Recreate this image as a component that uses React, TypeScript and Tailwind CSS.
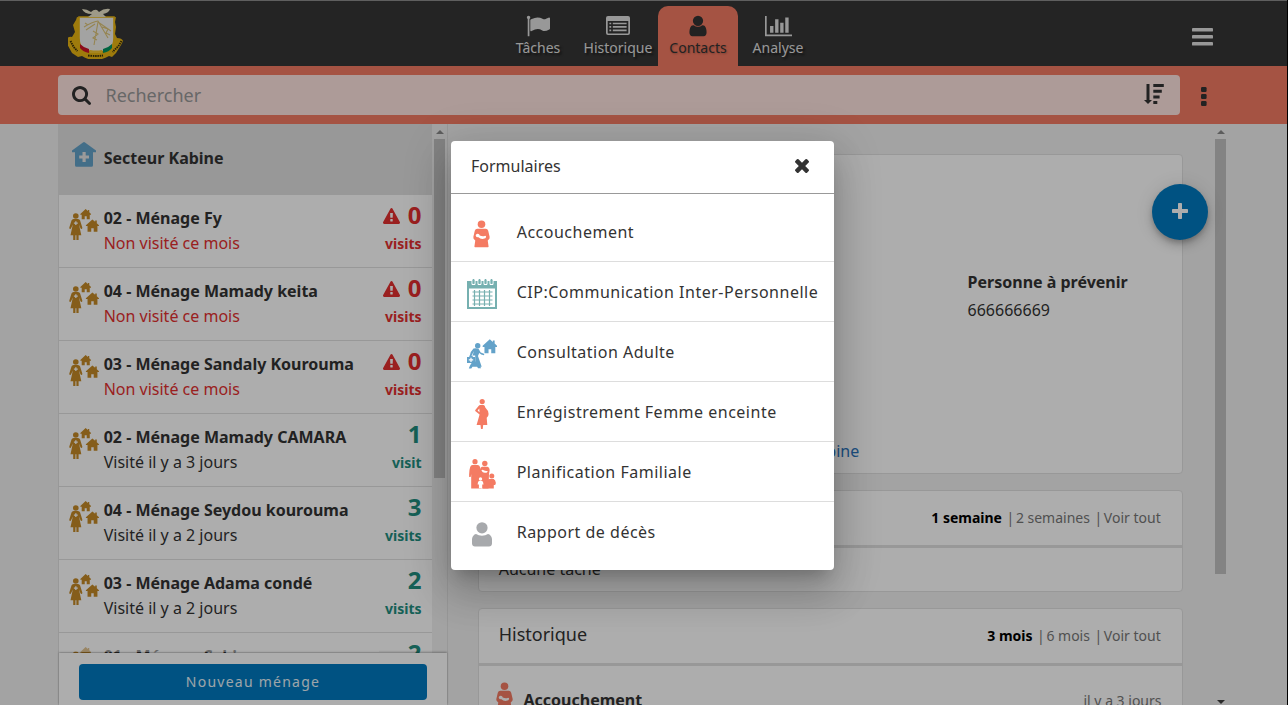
import React from "react";

type IconProps = { className?: string };

const Flag = ({ className }: IconProps) => (
  <svg viewBox="0 0 1792 1792" className={className} fill="currentColor">
    <path d="M320 256q0 72-64 110v1266q0 13-9.5 22.5t-22.5 9.5h-64q-13 0-22.5-9.5t-9.5-22.5v-1266q-64-38-64-110 0-53 37.5-90.5t90.5-37.5 90.5 37.5 37.5 90.5zm1472 64v763q0 25-12.5 38.5t-39.5 27.5q-215 116-369 116-61 0-123.5-22t-108.5-48-115.5-48-142.5-22q-192 0-464 146-17 9-33 9-26 0-45-19t-19-45v-742q0-32 31-55 21-14 79-43 236-120 421-120 107 0 200 29t219 88q38 19 88 19 54 0 117.5-21t110-47 88-47 54.5-21q26 0 45 19t19 45z" />
  </svg>
);

const ListAlt = ({ className }: IconProps) => (
  <svg viewBox="0 0 24 24" className={className} fill="currentColor">
    <path
      fillRule="evenodd"
      d="M2 2h20a2 2 0 0 1 2 2v15a2 2 0 0 1-2 2H2a2 2 0 0 1-2-2V4a2 2 0 0 1 2-2zM1.7 7v12q0 .4.4.4h19.8q.4 0 .4-.4V7z"
    />
    <path d="M3.4 8.7h1.8v1.6H3.4zM6.8 8.7h13.8v1.6H6.8zM3.4 12.1h1.8v1.6H3.4zM6.8 12.1h13.8v1.6H6.8zM3.4 15.6h1.8v1.6H3.4zM6.8 15.6h13.8v1.6H6.8z" />
  </svg>
);

const User = ({ className }: IconProps) => (
  <svg viewBox="0 0 1792 1792" className={className} fill="currentColor">
    <path d="M1536 1399q0 109-62.5 187t-150.5 78h-854q-88 0-150.5-78t-62.5-187q0-85 8.5-160.5t31.5-152 58.5-131 94-89 134.5-34.5q131 128 313 128t313-128q76 0 134.5 34.5t94 89 58.5 131 31.5 152 8.5 160.5zm-256-887q0 159-112.5 271.5t-271.5 112.5-271.5-112.5-112.5-271.5 112.5-271.5 271.5-112.5 271.5 112.5 112.5 271.5z" />
  </svg>
);

const BarChart = ({ className }: IconProps) => (
  <svg viewBox="0 0 2048 1792" className={className} fill="currentColor">
    <path d="M640 896v512h-256v-512h256zm384-512v1024h-256v-1024h256zm1024 1152v128h-2048v-1536h128v1408h1920zm-640-896v768h-256v-768h256zm384-384v1152h-256v-1152h256z" />
  </svg>
);

const Search = ({ className }: IconProps) => (
  <svg viewBox="64 128 1664 1664" className={className} fill="currentColor">
    <path d="M1216 832q0-185-131.5-316.5t-316.5-131.5-316.5 131.5-131.5 316.5 131.5 316.5 316.5 131.5 316.5-131.5 131.5-316.5zm512 832q0 52-38 90t-90 38q-54 0-90-38l-343-342q-179 124-399 124-143 0-273.5-55.5t-225-150-150-225-55.5-273.5 55.5-273.5 150-225 225-150 273.5-55.5 273.5 55.5 225 150 150 225 55.5 273.5q0 220-124 399l343 343q37 37 37 90z" />
  </svg>
);

const Bars = ({ className }: IconProps) => (
  <svg viewBox="0 0 21 18" className={className} fill="currentColor">
    <rect width="21" height="3.6" rx=".9" />
    <rect y="7" width="21" height="3.6" rx=".9" />
    <rect y="14" width="21" height="3.6" rx=".9" />
  </svg>
);

const SortDesc = ({ className }: IconProps) => (
  <svg viewBox="0 0 20 20" className={className} fill="currentColor">
    <path d="M2.500 0h3v16H8L4 20l-4-4h2.500zM9.300 0h10.500v3H9.300zM9.300 5.700h8.500v3H9.300zM9.300 11.400h6.300v3H9.300zM9.300 17h4v3h-4z" />
  </svg>
);

const Dots = ({ className }: IconProps) => (
  <svg viewBox="0 0 6 19" className={className} fill="currentColor">
    <rect width="5.600" height="5" rx="1.200" />
    <rect y="7" width="5.600" height="5" rx="1.200" />
    <rect y="14" width="5.600" height="5" rx="1.200" />
  </svg>
);

const Times = ({ className }: IconProps) => (
  <svg viewBox="302 366 1188 1188" className={className} fill="currentColor">
    <path d="M1490 1322q0 40-28 68l-136 136q-28 28-68 28t-68-28l-294-294-294 294q-28 28-68 28t-68-28l-136-136q-28-28-28-68t28-68l294-294-294-294q-28-28-28-68t28-68l136-136q28-28 68-28t68 28l294 294 294-294q28-28 68-28t68 28l136 136q28 28 28 68t-28 68l-294 294 294 294q28 28 28 68z" />
  </svg>
);

const Warning = ({ className }: IconProps) => (
  <svg viewBox="0 0 1792 1664" className={className} fill="currentColor">
    <path d="M1024 1375v-190q0-14-9.500-23.500t-22.500-9.500h-192q-13 0-22.500 9.500t-9.500 23.500v190q0 14 9.500 23.500t22.500 9.500h192q13 0 22.500-9.500t9.500-23.500zm-2-374l18-459q0-12-10-19-13-11-24-11h-220q-11 0-24 11-10 7-10 21l17 457q0 10 10 16.500t24 6.500h185q14 0 23.500-6.500t10.500-16.500zm-14-934l768 1408q35 63-2 126-17 29-46.500 46t-63.500 17h-1536q-34 0-63.500-17t-46.500-46q-37-63-2-126l768-1408q17-31 47-49t65-18 65 18 47 49z" />
  </svg>
);

const Emblem = ({ className }: IconProps) => (
  <svg viewBox="0 0 56 51" className={className}>
    <path d="M9 9l5 1v26l4 6q10 4 20 0l5-7V10l5-1-1 5 1 5-1 7 2 4q5 0 6 3l-2 4-5 8-4 4-3-1q-7 4-14 4t-13-4l-4 1-6-4-5-9-1-4q2-4 6-3l3-5-2-7 3-5z" fill="#e9b613" />
    <path d="M11 9h35v21q0 9-6 12-11 4-23 0-6-3-6-12z" fill="#f1f1ef" stroke="#e9b613" strokeWidth="1.600" />
    <path d="M14 1q5 0 9 3 3-3 6-2l2 2q5-4 11-3-1 4-7 5l3 3H20l4-3q-8 0-10-5z" fill="#e9e4c9" />
    <path d="M16 19q8-5 14-6l10 17M30 14l-4 23M30 14l13 9M18 22l9-6M25 23l5 3-5 4 4 2M34 19l6 2-2 4 4 2M20 17l-3-2" fill="none" stroke="#dcc377" strokeWidth="1.100" />
    <path d="M12 36q4 4 9 5v4q-6-1-9-5z" fill="#ce1126" />
    <path d="M22 42q6 1 12 0v3H22z" fill="#f4c430" />
    <path d="M35 41q5-1 9-5v4q-3 4-9 5z" fill="#009460" />
    <path d="M2.500 33l2 4 2 3 3 3M53.500 33l-3 5-3 3-3 3M20 47.500q8 1 15 0" fill="none" stroke="#3b3008" strokeWidth="1.900" strokeDasharray="1.500 .8" />
  </svg>
);

const HouseShape = () => (
  <path d="M6 0l2.700 2.100V1h1.600v2.400L12.400 5.200v.8h-1.500V11H7.300V7.800H4.900V11H1.300V6H-.3v-.8z" />
);

const HealthHouse = ({ className }: IconProps) => (
  <svg viewBox="0 0 24 25" className={className}>
    <path d="M12 0q.5 0 1 .4L24 8.500v1.800h-3v13q0 1.500-1.500 1.500h-15Q3 24.800 3 23.300v-13H0V8.500L11 .4q.5-.4 1-.4z" fill="#63a2c9" />
    <path d="M10.500 10h3.200v3.400H17v3.200h-3.300V20h-3.200v-3.400H7.200v-3.200h3.300z" fill="#e3e3e3" />
  </svg>
);

const Household = ({ className }: IconProps) => (
  <svg viewBox="0 0 30 31" className={className} fill="#c58a27">
    <circle cx="6.800" cy="7" r="2.800" />
    <path d="M4.600 10H9q1.600 0 2.100 1.600l2.200 7q.2 1.200-.7 1.300-.8.100-1.200-.9L10 15.500l2.300 10.800H9.600V31H7.400v-4.700h-1V31H4.200v-4.700H1.500l2.300-10.800L2.200 19q-.4 1-1.200.9-.9-.1-.7-1.300l2.200-7Q3 10 4.600 10z" />
    <path d="M6.200 12.200h1.300v1.300h1.300v1.300H7.500v1.300H6.200v-1.300H4.900v-1.300h1.300z" fill="#fff" />
    <g transform="translate(11.600 .1) scale(.84 .93)"><HouseShape /></g>
    <g transform="translate(17.200 10.400) scale(1.030 1.120)"><HouseShape /></g>
  </svg>
);

const MotherBaby = ({ className }: IconProps) => (
  <svg viewBox="0 0 18 29" className={className}>
    <circle cx="9" cy="4.100" r="4" fill="#f47b63" />
    <path d="M4.500 9h9q2 0 2.600 2l1.500 6.500q.4 2-1.200 3.200l-.8.600.9 6.500q0 .7-.7.700H2.200q-.7 0-.7-.7l.9-6.500-.8-.6Q0 19.500.4 17.500L1.900 11q.6-2 2.600-2z" fill="#f47b63" />
    <path d="M2.800 15.700a2.200 2.200 0 0 1 4.300.4q3 1.100 5.200.4 1.700-.2 1.600 1.200-.2 1.500-2.800 1.900-3.400.4-5.300-1.600-2.600.300-3-2.300z" fill="#fff" />
  </svg>
);

const Calendar = ({ className }: IconProps) => (
  <svg viewBox="0 0 30 31" className={className}>
    <path d="M0 3h30v28H0z" fill="#76b0b0" />
    <path d="M2 10.500h26V29H2z" fill="#fff" />
    <path d="M5.500 14h20M5.500 18h20M5.500 22h20M5.500 26h20M7.500 12v16M12.500 12v16M17.500 12v16M22.500 12v16" stroke="#76b0b0" strokeWidth="1.200" />
    <path d="M5 2v4.500h3V2M11 2v4.500h3V2M17 2v4.500h3V2M23 2v4.500h3V2" fill="#76b0b0" stroke="#fff" strokeWidth="1" />
    <path d="M5.700 1h1.600v4H5.700zM11.700 1h1.600v4h-1.600zM17.700 1h1.600v4h-1.600zM23.700 1h1.600v4h-1.600z" fill="#76b0b0" />
  </svg>
);

const HomeVisit = ({ className }: IconProps) => (
  <svg viewBox="0 0 30 30" className={className} fill="#63a2c9">
    <g transform="translate(16 .2) scale(1.130 1.280)"><HouseShape /></g>
    <circle cx="10.700" cy="6.800" r="2.700" />
    <path d="M6.500 9.600q2.500-1 5 .2l2.200 3.700 3.300 1.300q.7.800-.2 1.500-2.800-.3-4.600-2.200l-1.200 3 3.700 10.700h-1.300l.7 1.500h-3l-1-1.500H5.500L4.300 29.500H1.800L3 26.500l2.500-4h2.700v-6H5.500L7 12l-2.600 5H2.700q1-5 3.800-7.400z" />
    <path d="M0 18h2.300v-1.200h3.400V18H8v6H0z" />
    <path d="M3.400 18.700h1.200v1.600h1.600v1.200H4.600v1.600H3.400v-1.600H1.800v-1.200h1.600z" fill="#fff" />
  </svg>
);

const Pregnant = ({ className }: IconProps) => (
  <svg viewBox="0 0 14 30" className={className} fill="#f47b63">
    <circle cx="7.200" cy="2.600" r="2.600" />
    <path
      fillRule="evenodd"
      d="M5 6h3.500q1.500.4 1.800 2.500 3.200 3 3.300 6.500 0 2.500-1.900 3.700l.6 7.300H8.200l-.5 4H6l-.5-4H1.600l3-10.500L.5 12.300q-.7-.8 0-1.600L4 6.600Q4.500 6 5 6zM4.300 9.600L2.600 11.500l1.900 1.700z"
    />
  </svg>
);

const Family = ({ className }: IconProps) => (
  <svg viewBox="0 0 27 30" className={className}>
    <g fill="#f47b63">
      <circle cx="6" cy="2.700" r="2.600" />
      <path d="M3.500 6h5q2 0 2.500 2l1 5v16.500H2.200V15l-.5 3H.2q-.4-6 1-10 .6-2 2.300-2z" />
      <circle cx="15.800" cy="4.500" r="2.700" />
      <path d="M13 7.800h5.500q2 .4 2.200 3.200l-.7 4-.5 14.500H10V15l1.200-5q.4-2 1.800-2.200z" />
      <circle cx="22.800" cy="17" r="2.500" />
      <path d="M20.500 20h4.200q1.800 1 2.200 4l-.7 2h-1.400v3.500h-11L17 21z" />
    </g>
    <path d="M12.400 11.500q1-1.600 2.300-.2 1.700 1 3.800.6.400 1.800-2.200 1.800-2.600.3-3.900-2.200z" fill="#fff" />
    <circle cx="11.500" cy="20" r="1.700" fill="#fff" />
    <path d="M9.800 22h3.500q1 .6 1.200 3.500h-1.300v4H9.900v-4H8.600q.2-2.900 1.200-3.500z" fill="#fff" />
  </svg>
);

const Person = ({ className }: IconProps) => (
  <svg viewBox="0 0 20 25" className={className} fill="#a7a9ac">
    <circle cx="10" cy="5.800" r="5.600" />
    <path d="M4 12q2.500 1.700 6 1.700T16 12q3.300.8 4 5v4.500q-.2 3-3 3H3q-2.800 0-3-3V17q.7-4.200 4-5z" />
  </svg>
);

const tabs = [
  { label: "Tâches", icon: <Flag className="h-6 w-6" /> },
  { label: "Historique", icon: <ListAlt className="h-6 w-6" /> },
  { label: "Contacts", icon: <User className="h-6 w-6" />, active: true },
  { label: "Analyse", icon: <BarChart className="h-6 w-[27px]" /> },
];

const households = [
  { name: "02 - Ménage Fy", count: 0 },
  { name: "04 - Ménage Mamady keita", count: 0 },
  { name: "03 - Ménage Sandaly Kourouma", count: 0 },
  { name: "02 - Ménage Mamady CAMARA", count: 1, status: "Visité il y a 3 jours" },
  { name: "04 - Ménage Seydou kourouma", count: 3, status: "Visité il y a 2 jours" },
  { name: "03 - Ménage Adama condé", count: 2, status: "Visité il y a 2 jours" },
  { name: "01 - Ménage Sekina", count: 2, status: "Visité il y a 2 jours" },
];

const forms = [
  { label: "Accouchement", icon: <MotherBaby className="mt-[2px] mr-[1px] h-[28px] w-[17px]" /> },
  { label: "CIP:Communication Inter-Personnelle", icon: <Calendar className="mt-[2px] h-[31px] w-[30px]" /> },
  { label: "Consultation Adulte", icon: <HomeVisit className="mt-[2px] h-[30px] w-[30px]" /> },
  { label: "Enrégistrement Femme enceinte", icon: <Pregnant className="mt-[2px] h-[30px] w-[14px]" /> },
  { label: "Planification Familiale", icon: <Family className="mt-[2px] h-[30px] w-[27px]" /> },
  { label: "Rapport de décès", icon: <Person className="mt-[3px] h-[25px] w-[20px]" /> },
];

const Arrow = ({ down }: { down?: boolean }) => (
  <svg viewBox="0 0 8 4" className={down ? "h-1 w-2 rotate-180 text-[#404040]" : "h-1 w-2 text-[#8a8a8a]"} fill="currentColor">
    <path d="M4 0l4 4H0z" />
  </svg>
);

function Filters({ items }: { items: string[] }) {
  return (
    <div className="flex gap-[4.500px] text-sm text-[#777]">
      <span className="font-bold text-black">{items[0]}</span>
      {items.slice(1).map((item) => (
        <span key={item}>
          |<span className="ml-[1.700px]">{item}</span>
        </span>
      ))}
    </div>
  );
}

function Header() {
  return (
    <header className="flex h-[66px] justify-between border-t border-[#8c8c8c] bg-[#353535] pr-[74px] pl-[68px] text-[#e0e0e0]">
      <div className="flex w-[105px] pt-[7px]">
        <Emblem className="h-[51px] w-[56px]" />
      </div>
      <nav className="mt-[5px] flex pl-[35px]">
        {tabs.map((t) => (
          <div
            key={t.label}
            className={
              t.active
                ? "flex w-20 flex-col items-center rounded-t-[10px] bg-[#f47b63] pt-2 text-[#333] [text-shadow:1px_1px_2px_rgba(0,0,0,0.25)]"
                : "flex w-20 flex-col items-center pt-2 [text-shadow:2px_2px_2px_rgba(0,0,0,0.5)]"
            }
          >
            {t.icon}
            <span className="text-sm leading-[19px]">{t.label}</span>
          </div>
        ))}
      </nav>
      <div className="flex w-[105px] justify-end pt-[26.500px]">
        <Bars className="h-[18px] w-[21px]" />
      </div>
    </header>
  );
}

function SearchBar() {
  return (
    <div className="flex h-[58px] items-center bg-[#f47b63] pl-[58px] text-[#333]">
      <div className="flex h-10 w-[1122px] items-center rounded bg-[#ffe5e0] pr-4 pl-[14px]">
        <Search className="h-[19px] w-[19px]" />
        <span className="ml-[14.500px] text-lg text-[#999]">Rechercher</span>
        <SortDesc className="mb-[2px] ml-auto h-5 w-5" />
      </div>
      <Dots className="mt-[2px] ml-[21px] h-[19px] w-[6px]" />
    </div>
  );
}

function HouseholdList() {
  return (
    <aside className="flex w-[390px] flex-col border-x border-[#e0e0e0]">
      <div className="flex h-[529px] overflow-hidden">
        <div className="w-[373px] shrink-0 bg-white">
          <div className="flex h-[71px] bg-[#e0e0e0] pl-[13px]">
            <HealthHouse className="mt-[18px] h-[25px] w-6" />
            <span className="mt-[22px] ml-[7.700px] text-base font-bold text-[#333]">Secteur Kabine</span>
          </div>
          {households.map((h) => (
            <div key={h.name} className="flex h-[73px] border-b border-[#e0e0e0] pr-[10.500px] pl-[10px]">
              <Household className="mt-[14px] h-[31px] w-[30px] shrink-0" />
              <div className="ml-[4.700px] grow pt-[11px] text-base leading-[25px] text-[#333]">
                <div className="font-bold whitespace-nowrap">{h.name}</div>
                <div className={h.count ? "" : "text-[#e33030]"}>{h.status ?? "Non visité ce mois"}</div>
              </div>
              <div className={h.count ? "text-right font-bold text-[#218e7f]" : "text-right font-bold text-[#e33030]"}>
                <div className="flex h-[38px] items-center justify-end gap-2 pt-[1px] text-2xl">
                  {h.count === 0 && <Warning className="mt-[2px] h-4 w-[17px]" />}
                  {h.count}
                </div>
                <div className="pt-[1px] text-sm leading-5">{h.count === 1 ? "visit" : "visits"}</div>
              </div>
            </div>
          ))}
        </div>
        <div className="flex w-[15px] flex-col items-center bg-[#f0f0f0] pt-[6px]">
          <Arrow />
          <div className="mt-[5px] h-[339px] w-[11px] bg-[#c1c1c1]" />
        </div>
      </div>
      <div className="relative h-[52px] bg-white px-5 pt-[11px] shadow-[0_-1px_2px_rgba(0,0,0,0.3)]">
        <div className="pointer-events-none absolute -top-[20px] left-0 h-[19px] w-[320px] bg-white/50" />
        <button className="h-9 w-[348px] rounded bg-[#007ac0] text-sm tracking-[1.250px] text-[#e8f3fa]">Nouveau ménage</button>
      </div>
    </aside>
  );
}

function Details() {
  return (
    <main className="flex grow justify-between pr-[61px] pl-[30px]">
      <div className="flex w-[705px] flex-col gap-4 pt-[30px] text-[#333]">
        <section className="flex h-[320px] shrink-0 justify-between rounded border border-[#e0e0e0] bg-white px-5">
          <span className="mt-[284px] ml-[247.500px] text-base text-[#2a75bd]">Secteur Kabine</span>
          <div className="mt-[113px] mr-[34.300px] text-base leading-7">
            <div className="font-bold">Personne à prévenir</div>
            <div>666666669</div>
          </div>
        </section>
        <section className="h-[102px] shrink-0 rounded border border-[#e0e0e0] bg-white">
          <div className="flex h-[57px] items-center justify-between border-b-3 border-[#e0e0e0] pr-[21.300px] pl-5">
            <h2 className="-mt-1 text-lg">Tâches</h2>
            <Filters items={["1 semaine", "2 semaines", "Voir tout"]} />
          </div>
          <p className="pt-[9px] pl-[19.700px] text-base">Aucune tâche</p>
        </section>
        <section className="h-[200px] shrink-0 rounded border border-[#e0e0e0] bg-white">
          <div className="flex h-[57px] items-center justify-between border-b-3 border-[#e0e0e0] pr-[21.300px] pl-[19.700px]">
            <h2 className="-mt-[5px] text-lg">Historique</h2>
            <Filters items={["3 mois", "6 mois", "Voir tout"]} />
          </div>
          <div className="flex pt-4 pr-[20.500px] pl-[16.500px]">
            <MotherBaby className="h-[28px] w-[17px]" />
            <span className="mt-[6px] ml-[11px] text-base font-bold">Accouchement</span>
            <span className="mt-[9px] ml-auto text-sm text-[#777]">il y a 3 jours</span>
          </div>
        </section>
      </div>
      <div className="flex w-[11px] flex-col items-center pt-[6px]">
        <Arrow />
        <div className="mt-[5px] mb-auto h-[435px] w-[11px] bg-[#c1c1c1]" />
        <div className="mb-[1px]">
          <Arrow down />
        </div>
      </div>
    </main>
  );
}

function FormsDialog() {
  return (
    <div className="absolute top-[141px] left-[451px] h-[429px] w-[383px] rounded bg-white text-base text-[#333] shadow-[0_11px_15px_-7px_rgba(0,0,0,0.2),0_24px_38px_3px_rgba(0,0,0,0.14),0_9px_46px_8px_rgba(0,0,0,0.12)]">
      <div className="flex h-[53px] items-center justify-between border-b border-[#999] pr-[25px] pb-[2px] pl-5">
        <h1 className="text-base">Formulaires</h1>
        <Times className="h-[14px] w-[14px]" />
      </div>
      <ul className="pt-2">
        {forms.map((f) => (
          <li key={f.label} className="flex h-[60px] items-center border-b border-[#ddd] pl-4 last:border-b-0">
            <span className="flex w-[30px] justify-center pt-[2px]">{f.icon}</span>
            <span className="ml-[19.700px] tracking-[0.5px] whitespace-nowrap">{f.label}</span>
          </li>
        ))}
      </ul>
    </div>
  );
}

export default function App() {
  return (
    <div className="relative h-[705px] w-[1288px] overflow-hidden border-r border-black bg-[#f0f0f0] font-['Noto_Sans',sans-serif]">
      <Header />
      <SearchBar />
      <div className="flex h-[581px] pl-[58px]">
        <HouseholdList />
        <Details />
      </div>
      <div className="absolute top-[184px] left-[1152px] flex h-14 w-14 items-center justify-center rounded-full bg-[#007ac0] shadow-[0_3px_5px_-1px_rgba(0,0,0,0.2),0_6px_10px_rgba(0,0,0,0.14),0_1px_18px_rgba(0,0,0,0.12)]">
        <svg viewBox="0 0 16 16" className="mb-[2px] h-4 w-4" fill="#fff">
          <path d="M6 .8q0-.8.800-.8h2.400q.8 0 .8.800V6h5.200q.8 0 .8.800v2.400q0 .8-.8.800H10v5.200q0 .8-.8.800H6.800q-.8 0-.8-.8V10H.8q-.8 0-.8-.8V6.800Q0 6 .8 6H6z" />
        </svg>
      </div>
      <div className="absolute inset-0 bg-black/32" />
      <FormsDialog />
    </div>
  );
}
